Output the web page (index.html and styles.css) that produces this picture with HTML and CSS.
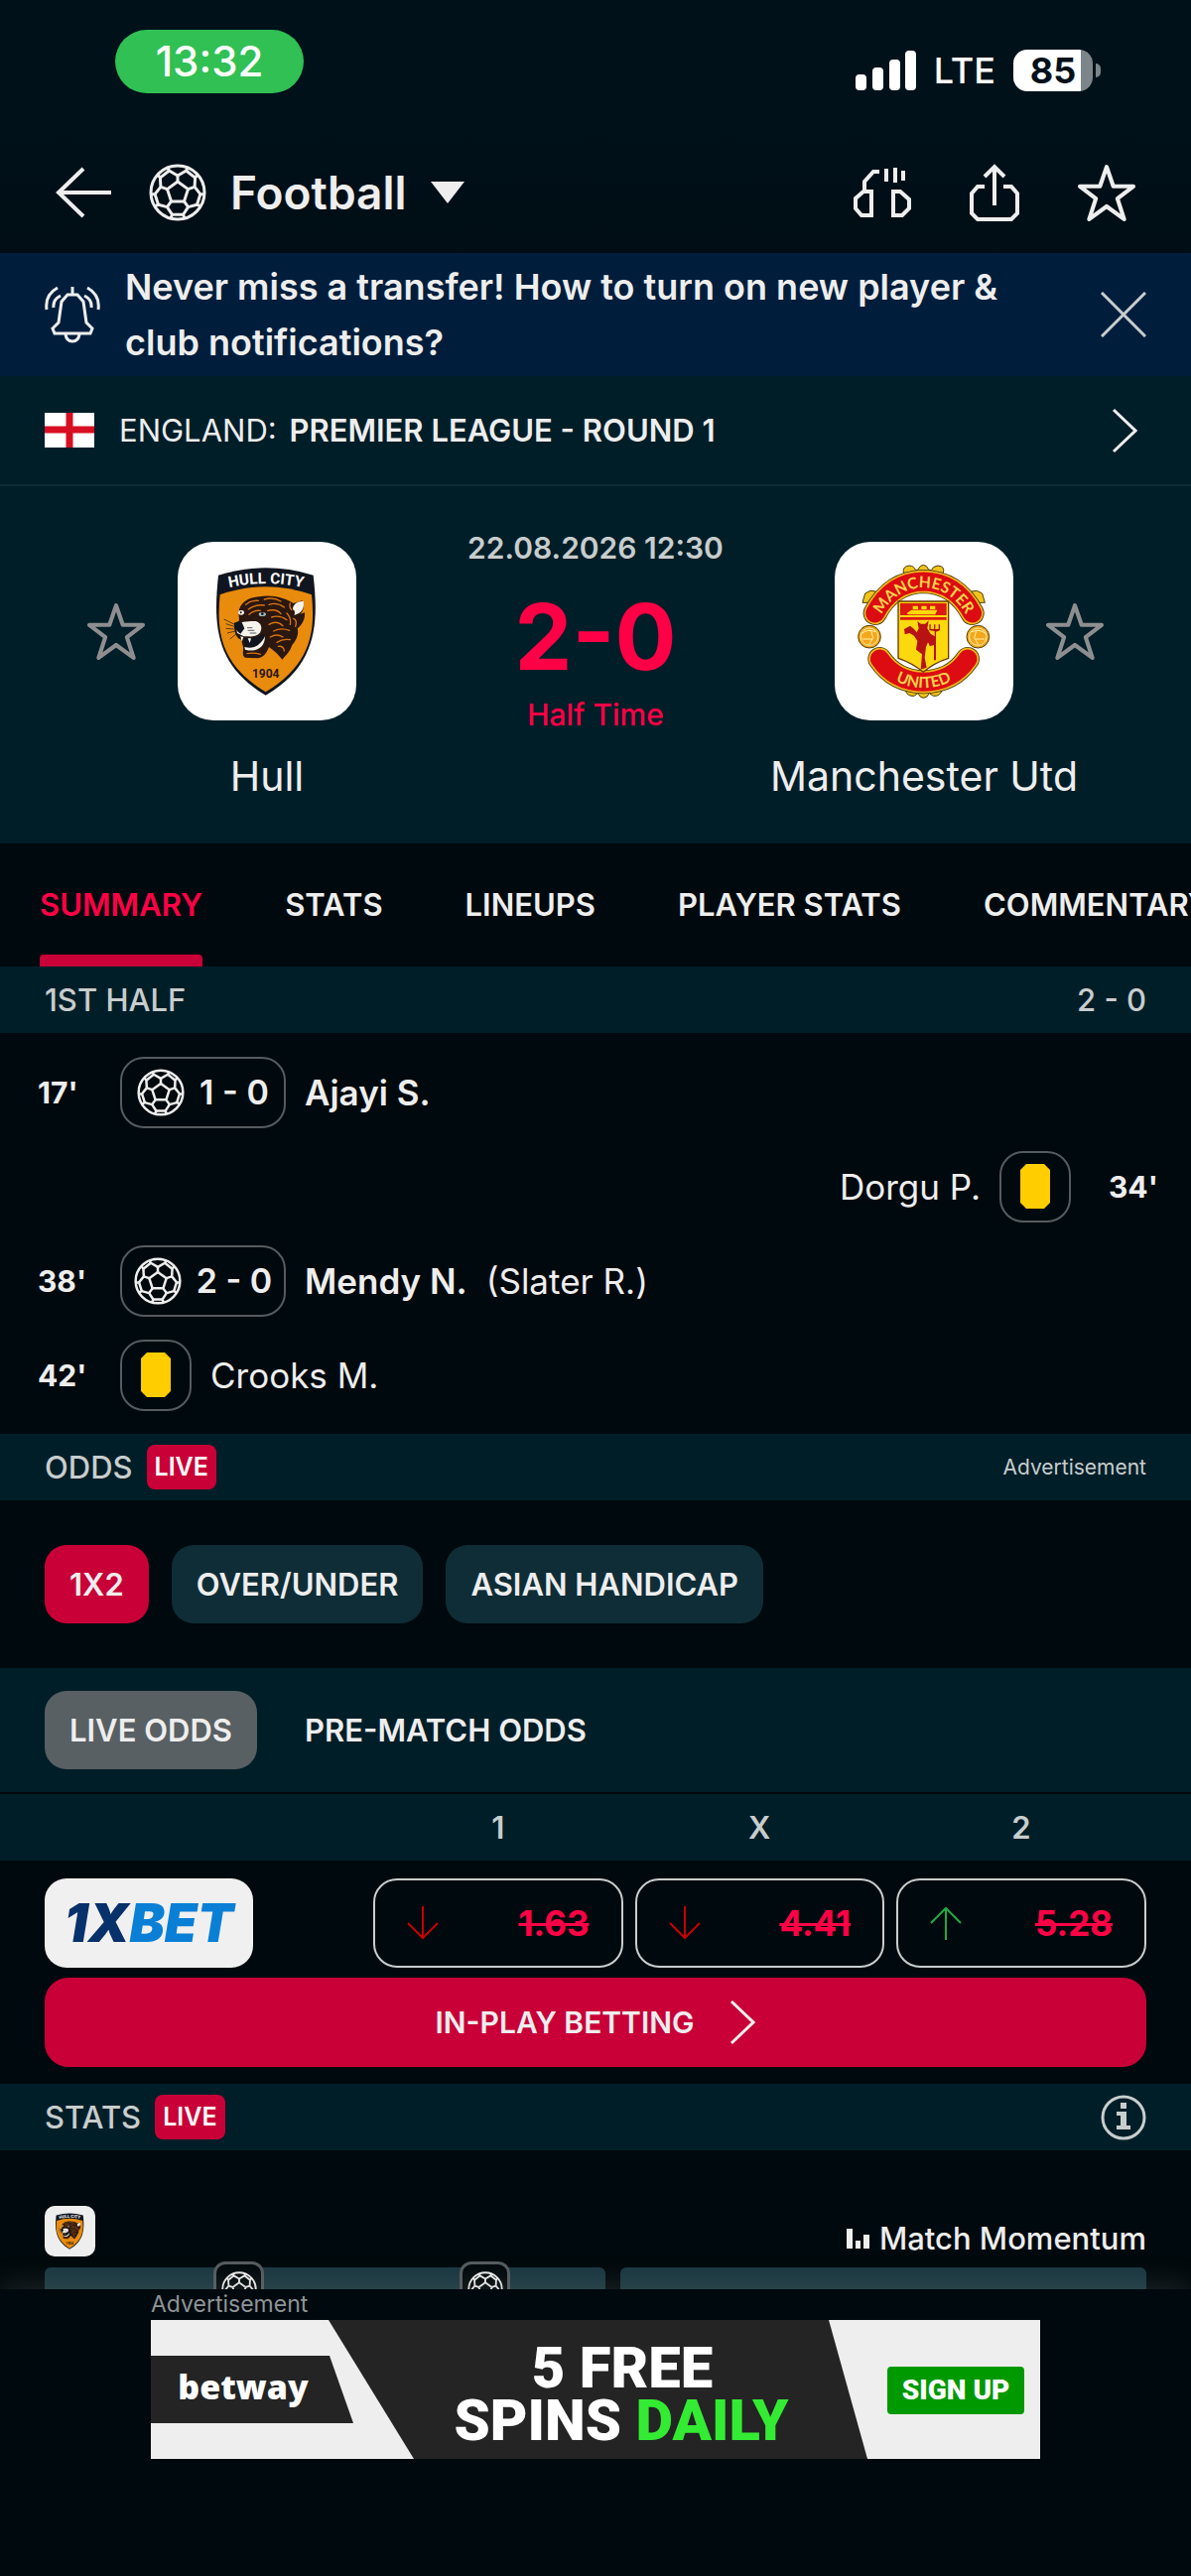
FILE: index.html
```html
<!DOCTYPE html>
<html lang="en">
<head>
    <meta charset="UTF-8">
    <meta name="viewport" content="width=device-width, initial-scale=1.0">
    <title>Hull - Manchester Utd</title>
    <link rel="stylesheet" href="styles.css">
</head>
<body>
    <!-- Shared icons -->
    <svg class="sprite" aria-hidden="true">
        <symbol id="ball" viewBox="-29 -29 58 58">
            <g fill="none" stroke="currentColor" stroke-width="3" stroke-linejoin="round">
                <circle r="27"/>
                <path d="M0-11 10.5-3.4 6.5 8.9H-6.5L-10.5-3.4Z"/>
                <path d="M0-11V-17M10.5-3.4 17.1-5.6M6.5 8.9 10.6 14.6M-6.5 8.9-10.6 14.6M-10.5-3.4-17.1-5.6"/>
                <path d="M-10-25-8.6-22 0-17 8.6-22 10-25M20-18 17.6-14.8 17.1-5.6 22.9 1.6 27 2M23 14 19.5 12.2 10.6 14.6 5.6 22.3 7 26M-23 14-19.5 12.2-10.6 14.6-5.6 22.3-7 26M-20-18-17.6-14.8-17.1-5.6-22.9 1.6-27 2"/>
                <path d="M8.6-22 17.6-14.8M22.9 1.6 19.5 12.2M5.6 22.3H-5.6M-22.9 1.6-19.5 12.2M-8.6-22-17.6-14.8"/>
            </g>
        </symbol>
        <symbol id="star" viewBox="0 0 56 56">
            <path d="M28 3 34.5 22H54L38.5 34 45 54 28 41.5 11 54 17.5 34 2 22H21.5Z" fill="none" stroke="currentColor" stroke-width="4" stroke-linejoin="round"/>
        </symbol>
    </svg>

    <main class="screen">
        <!-- Phone status bar -->
        <div class="status-bar">
            <span class="clock">13:32</span>
            <div class="status-icons">
                <svg width="61" height="40" viewBox="0 0 61 40" fill="#fff">
                    <rect x="0" y="24" width="11" height="16" rx="4"/>
                    <rect x="17" y="17" width="11" height="23" rx="4"/>
                    <rect x="34" y="9" width="11" height="31" rx="4"/>
                    <rect x="50" y="0" width="11" height="40" rx="4"/>
                </svg>
                <span class="network">LTE</span>
                <span class="battery">85</span>
            </div>
        </div>

        <header class="top-bar">
            <button class="icon-btn" aria-label="Back">
                <svg width="56" height="56" viewBox="0 0 56 56"><path d="M28 4 3 28 28 52M3 28H56" fill="none" stroke="currentColor" stroke-width="4"/></svg>
            </button>
            <button class="sport-btn">
                <svg width="58" height="58"><use href="#ball"/></svg>
                Football
                <svg width="34" height="22" viewBox="0 0 34 22"><path d="M0 0H34L17 22Z" fill="currentColor"/></svg>
            </button>
            <div class="top-actions">
                <button class="icon-btn" aria-label="Listen">
                    <svg width="58" height="56" viewBox="0 0 58 56" fill="none" stroke="currentColor" stroke-width="4">
                        <path d="M11 27V17L20 7H26M33 4V17M42 3V18M50 6V16"/>
                        <path d="M18 27H10L2 34V44L8 51H18ZM40 27H47L56 35V44L49 51H40Z"/>
                    </svg>
                </button>
                <button class="icon-btn" aria-label="Share">
                    <svg width="56" height="58" viewBox="0 0 56 58" fill="none" stroke="currentColor" stroke-width="4">
                        <path d="M28 42V3M18 13 28 3 38 13M18 23H11L5 30V50L11 56H45L51 50V30L45 23H37"/>
                    </svg>
                </button>
                <button class="icon-btn" aria-label="Add to favourites">
                    <svg width="58" height="58"><use href="#star"/></svg>
                </button>
            </div>
        </header>

        <!-- Notification banner -->
        <div class="notice">
            <svg width="58" height="58" viewBox="0 0 58 58" fill="none" stroke="#eee" stroke-width="3">
                <path d="M29 1V9M24 9H34L40 16L43 37L49 43L47 48H11L9 43L15 37L18 16ZM22 49Q23 56 29 56Q35 56 36 49"/>
                <path d="M14 2Q1 9 3 24M17 10Q9 14 10 22M44 2Q57 9 55 24M41 10Q49 14 48 22"/>
            </svg>
            <p>Never miss a transfer! How to turn on new player &amp; club notifications?</p>
            <button class="icon-btn" aria-label="Close">
                <svg width="46" height="46" viewBox="0 0 46 46"><path d="M1 1 45 45M45 1 1 45" stroke="#c8cdcd" stroke-width="3"/></svg>
            </button>
        </div>

        <a class="league" href="#">
            <svg width="50" height="35" viewBox="0 0 50 35"><path d="M0 0H50V35H0Z" fill="#fff"/><path d="M25 0V35M0 17H50" stroke="#d80f22" stroke-width="7"/></svg>
            <span>ENGLAND: <strong>PREMIER LEAGUE - ROUND 1</strong></span>
            <svg class="push" width="26" height="46" viewBox="0 0 26 46"><path d="M2 2 24 23 2 44" fill="none" stroke="currentColor" stroke-width="3"/></svg>
        </a>

        <!-- Score -->
        <section class="match">
            <div class="team">
                <button class="icon-btn fav fav-left" aria-label="Follow Hull"><svg width="58" height="58"><use href="#star"/></svg></button>
                <span class="crest">
                    <svg width="180" height="180" viewBox="0 0 540 540">
                        <g id="hull">
                            <path d="M123 101Q266 57 410 101C426 245 423 372 266 464C110 372 108 245 123 101Z" fill="#10151f"/>
                            <path d="M128 160Q266 112 405 160C416 270 405 370 266 454C128 370 117 270 128 160Z" fill="#e98b0c"/>
                            <path id="hull-arc" d="M140 142Q266 110 394 142" fill="none"/>
                            <text class="crest-hull"><textPath href="#hull-arc" startOffset="50%" text-anchor="middle">HULL CITY</textPath></text>
                            <path d="M184 212C190 182 214 168 246 166C284 158 326 170 350 186L376 178C386 196 378 212 370 218L384 214C386 236 374 252 362 262C368 284 354 302 346 312C340 332 328 342 316 356C306 342 290 328 276 318C268 340 256 350 242 352L204 350C192 344 200 328 198 318L192 296C180 292 178 284 174 276L170 254L186 238Z" fill="#2a1710"/>
                            <g fill="none" stroke="#d9730f" stroke-width="4" stroke-linecap="round">
                                <path d="M206 190Q222 176 244 178M214 204Q236 188 262 192M216 220Q230 206 250 208M262 174Q290 166 312 180M276 190Q300 182 322 198M272 208Q300 202 312 218M284 228Q308 220 330 236M276 250Q300 236 318 254M290 270Q312 258 338 268M280 288Q300 276 318 288M300 304Q318 292 340 296M330 216Q344 230 340 250M350 232Q362 236 356 256M322 330Q320 314 304 316M210 338Q228 334 250 340M340 186Q336 196 344 206"/>
                            </g>
                            <path d="M348 204C348 188 364 178 380 180C384 200 376 216 352 222Q358 210 348 204Z" fill="#f7f4ee"/>
                            <path d="M176 256C186 240 212 240 236 240C256 246 256 264 248 276C232 292 212 284 200 286L180 276Z" fill="#f7f4ee"/>
                            <path d="M170 246Q180 238 194 244L202 262L190 278Q174 270 170 246Z" fill="#10151f"/>
                            <path d="M200 290Q232 296 262 278C260 310 246 324 228 328L204 318Z" fill="#10151f"/>
                            <path d="M264 286C264 318 240 336 204 326L202 318C232 326 250 312 264 286ZM212 292 218 306 222 292ZM190 286 194 302 199 288Z" fill="#f7f4ee"/>
                            <ellipse cx="192" cy="214" rx="9" ry="7" fill="#f7f4ee"/>
                            <circle cx="191" cy="214" r="3" fill="#10151f"/>
                            <ellipse cx="256" cy="219" rx="11" ry="6" fill="#a9bdc4"/>
                            <circle cx="256" cy="218" r="4" fill="#10151f"/>
                            <path d="M172 250 140 234M170 256 146 248M172 264 146 262M174 270 150 276M178 278 158 294M210 260H226M212 268H232M218 276H238" stroke="#10151f" stroke-width="2"/>
                            <text class="crest-year" x="266" y="410" text-anchor="middle">1904</text>
                        </g>
                    </svg>
                </span>
                <h2>Hull</h2>
            </div>
            <div class="result">
                <time>22.08.2026 12:30</time>
                <strong class="score">2-0</strong>
                <span class="phase">Half Time</span>
            </div>
            <div class="team">
                <span class="crest">
                    <svg width="180" height="180" viewBox="0 0 540 540">
                        <g stroke="#4c3d09" stroke-width="3" fill="#f0c419">
                            <path d="M208 94Q204 74 226 72Q242 74 244 86L252 84Q258 70 268 70Q278 70 284 84L292 86Q296 74 312 72Q334 74 328 94Z"/>
                            <path d="M84 184 92 156 108 148 124 150 116 184ZM454 184 446 156 430 148 414 150 422 184Z"/>
                            <path d="M214 450Q220 468 240 466L252 458Q258 472 268 472Q280 472 286 458L298 466Q318 468 324 450Z"/>
                        </g>
                        <g fill="none" stroke-linecap="round">
                            <path d="M122 216Q172 122 268 120Q366 122 416 216" stroke="#4c3d09" stroke-width="72"/>
                            <path d="M122 216Q172 122 268 120Q366 122 416 216" stroke="#f0b81c" stroke-width="67"/>
                            <path d="M122 216Q172 122 268 120Q366 122 416 216" stroke="#dc0c12" stroke-width="57"/>
                            <path d="M136 354Q182 422 268 424Q356 422 402 354" stroke="#4c3d09" stroke-width="72"/>
                            <path d="M136 354Q182 422 268 424Q356 422 402 354" stroke="#f0b81c" stroke-width="67"/>
                            <path d="M136 354Q182 422 268 424Q356 422 402 354" stroke="#dc0c12" stroke-width="57"/>
                            <path id="mu-top" d="M132 238Q178 142 268 138Q360 142 406 238"/>
                            <path id="mu-bottom" d="M130 376Q184 440 268 442Q354 440 408 376"/>
                        </g>
                        <text class="crest-mu"><textPath href="#mu-top" startOffset="50%" text-anchor="middle">MANCHESTER</textPath></text>
                        <text class="crest-mu"><textPath href="#mu-bottom" startOffset="50%" text-anchor="middle">UNITED</textPath></text>
                        <path d="M192 180H344V352Q300 366 268 394Q234 366 192 352Z" fill="#fbd90d" stroke="#6b3a08" stroke-width="4"/>
                        <path d="M198 186H338V222H198ZM198 228H338V236H198Z" fill="#dc1a12"/>
                        <path d="M218 216 232 206H310L304 220H222ZM236 194H252V204H236ZM262 194H278V204H262ZM288 194H304V204H288Z" fill="#fbd90d"/>
                        <path d="M254 262 250 240 260 248H274L284 238 280 262 290 278 302 286 302 270 286 268V250H290V264H300V250H304V264H314V250H318V268L306 272V358H300V312L288 316 282 304 276 318 272 350 278 380 260 386 264 340 246 326 250 300 240 284 226 276 212 280 210 264 228 254 240 264 248 274Z" fill="#b81212"/>
                        <g fill="#f4a71c" stroke="#4c3d09" stroke-width="3">
                            <circle cx="105" cy="287" r="34"/>
                            <circle cx="433" cy="287" r="34"/>
                        </g>
                        <g fill="#f4a71c" stroke="#fff1a8" stroke-width="3">
                            <circle cx="105" cy="287" r="26"/>
                            <circle cx="433" cy="287" r="26"/>
                            <path d="M82 278Q98 262 124 272M110 270 116 290 104 310M84 294H114M456 278Q440 262 414 272M428 270 422 290 434 310M454 294H424" fill="none"/>
                        </g>
                    </svg>
                </span>
                <button class="icon-btn fav fav-right" aria-label="Follow Manchester Utd"><svg width="58" height="58"><use href="#star"/></svg></button>
                <h2>Manchester Utd</h2>
            </div>
        </section>

        <nav class="tabs">
            <a class="active" href="#">SUMMARY</a>
            <a href="#">STATS</a>
            <a href="#">LINEUPS</a>
            <a href="#">PLAYER STATS</a>
            <a href="#">COMMENTARY</a>
        </nav>

        <!-- Match events -->
        <div class="bar"><h3>1ST HALF</h3><span class="push">2 - 0</span></div>
        <ul class="events">
            <li>
                <span class="minute">17'</span>
                <span class="badge badge-goal"><svg width="48" height="48"><use href="#ball"/></svg>1 - 0</span>
                <strong>Ajayi S.</strong>
            </li>
            <li class="away">
                <span class="minute">34'</span>
                <span class="badge"><i class="card"></i></span>
                <span>Dorgu P.</span>
            </li>
            <li>
                <span class="minute">38'</span>
                <span class="badge badge-goal"><svg width="48" height="48"><use href="#ball"/></svg>2 - 0</span>
                <strong>Mendy N.</strong>
                <span>(Slater R.)</span>
            </li>
            <li>
                <span class="minute">42'</span>
                <span class="badge"><i class="card"></i></span>
                <span>Crooks M.</span>
            </li>
        </ul>

        <!-- Odds -->
        <div class="bar"><h3>ODDS</h3><span class="live">LIVE</span><small class="push">Advertisement</small></div>
        <div class="chips">
            <button class="chip chip-active">1X2</button>
            <button class="chip">OVER/UNDER</button>
            <button class="chip">ASIAN HANDICAP</button>
        </div>
        <div class="odds-switch">
            <button class="chip chip-grey">LIVE ODDS</button>
            <button class="chip chip-plain">PRE-MATCH ODDS</button>
        </div>
        <table class="odds">
            <thead>
                <tr><th></th><th>1</th><th>X</th><th>2</th></tr>
            </thead>
            <tbody>
                <tr>
                    <td><a class="bookmaker" href="#"><b>1X</b>BET</a></td>
                    <td><button class="odd"><svg class="down" width="32" height="34" viewBox="0 0 32 34"><path d="M16 0V32M1 17 16 32 31 17"/></svg><s>1.63</s></button></td>
                    <td><button class="odd"><svg class="down" width="32" height="34" viewBox="0 0 32 34"><path d="M16 0V32M1 17 16 32 31 17"/></svg><s>4.41</s></button></td>
                    <td><button class="odd"><svg class="up" width="32" height="34" viewBox="0 0 32 34"><path d="M16 34V2M1 17 16 2 31 17"/></svg><s>5.28</s></button></td>
                </tr>
            </tbody>
        </table>
        <div class="bet-row">
            <button class="bet-btn">IN-PLAY BETTING
                <svg width="26" height="46" viewBox="0 0 26 46"><path d="M2 2 24 23 2 44" fill="none" stroke="currentColor" stroke-width="3"/></svg>
            </button>
        </div>

        <!-- Stats -->
        <div class="bar">
            <h3>STATS</h3><span class="live">LIVE</span>
            <button class="icon-btn push" aria-label="Info">
                <svg width="46" height="46" viewBox="0 0 46 46"><circle cx="23" cy="23" r="21" fill="none" stroke="#c8cdcd" stroke-width="3"/><path d="M20 8H26V14H20ZM16 17H26V31H30V35H16V31H20V21H16Z" fill="#c8cdcd"/></svg>
            </button>
        </div>
        <section class="momentum">
            <div class="momentum-head">
                <span class="crest crest-small"><svg width="51" height="51" viewBox="0 0 540 540"><use href="#hull"/></svg></span>
                <h3 class="push"><svg width="23" height="20" viewBox="0 0 23 20" fill="currentColor"><path d="M0 0H6V20H0ZM9 12H14V20H9ZM17 6H23V20H17Z"/></svg>Match Momentum</h3>
            </div>
            <div class="chart">
                <div class="half first-half">
                    <span class="goal goal-17"><svg width="36" height="36"><use href="#ball"/></svg></span>
                    <span class="goal goal-38"><svg width="36" height="36"><use href="#ball"/></svg></span>
                </div>
                <div class="half second-half"></div>
            </div>
        </section>
    </main>

    <!-- Sticky advert -->
    <footer class="advert">
        <small>Advertisement</small>
        <a href="#" aria-label="betway">
            <svg viewBox="0 0 896 140">
                <path d="M0 0H896V140H0Z" fill="#eee"/>
                <path d="M179 0H683L722 140H265Z" fill="#242424"/>
                <path d="M0 36H180L204 104H0Z" fill="#242424"/>
                <text class="ad-brand" x="93" y="80" text-anchor="middle">betway</text>
                <text class="ad-line" x="475" y="68" text-anchor="middle">5 FREE</text>
                <text class="ad-line" x="474" y="121" text-anchor="middle">SPINS <tspan fill="#33eb33">DAILY</tspan></text>
                <rect x="742" y="47" width="138" height="48" rx="4" fill="#090"/>
                <text class="ad-sign" x="811" y="80" text-anchor="middle">SIGN UP</text>
            </svg>
        </a>
    </footer>
</body>
</html>
```

FILE: styles.css
```css
/* Global styles */
* {
    box-sizing: border-box;
}

body {
    margin: 0;
    height: 100vh;
    display: flex;
    flex-direction: column;
    background-color: #00090d;
    color: #eee;
    font-family: 'Inter', 'Liberation Sans', sans-serif;
    font-size: 31px;
    line-height: 36px;
}

h2, h3, p, ul {
    margin: 0;
    padding: 0;
    font-size: inherit;
}

a {
    color: inherit;
    text-decoration: none;
}

button {
    padding: 0;
    border: none;
    background: none;
    color: inherit;
    font: inherit;
    cursor: pointer;
}

svg {
    display: block;
    flex: none;
}

.sprite {
    position: absolute;
    width: 0;
    height: 0;
}

.push {
    margin-left: auto;
}

.screen {
    flex: 1;
    min-height: 0;
    overflow: hidden;
}

/* Status bar */
.status-bar {
    display: flex;
    align-items: flex-end;
    justify-content: space-between;
    height: 132px;
    padding: 0 91px 38px 116px;
    background-color: #00111a;
}

.clock {
    width: 190px;
    border-radius: 32px;
    background-color: #30c053;
    color: #fff;
    font-size: 42px;
    font-weight: 500;
    line-height: 64px;
    text-align: center;
}

.status-icons {
    display: flex;
    align-items: center;
    gap: 18px;
    color: #fff;
    font-size: 36px;
    font-weight: 500;
    line-height: 46px;
}

.battery {
    position: relative;
    width: 80px;
    height: 42px;
    margin-right: 8px;
    border-radius: 14px;
    background: linear-gradient(to right, #fff 68px, #7c868a 68px);
    color: #00111a;
    font-weight: 700;
    line-height: 42px;
    text-align: center;
}

.battery::after {
    content: "";
    position: absolute;
    top: 14px;
    left: 83px;
    width: 5px;
    height: 14px;
    border-radius: 0 5px 5px 0;
    background-color: #7c868a;
}

/* Top bar */
.top-bar {
    display: flex;
    align-items: center;
    gap: 38px;
    height: 123px;
    padding: 0 56px;
    background: linear-gradient(#00111a, #000d14);
}

.sport-btn {
    display: flex;
    align-items: center;
    gap: 24px;
    font-size: 46px;
    font-weight: 600;
}

.top-actions {
    display: flex;
    gap: 56px;
    margin-left: auto;
}

/* Notification banner */
.notice {
    display: flex;
    align-items: center;
    gap: 24px;
    padding: 6px 45px 6px 44px;
    background-color: #001e3c;
    font-size: 36px;
    font-weight: 600;
    line-height: 56px;
}

.notice p {
    flex: 1;
    padding-right: 60px;
}

/* League */
.league {
    display: flex;
    align-items: center;
    gap: 25px;
    height: 111px;
    padding: 0 54px 0 45px;
    border-bottom: 2px solid #0f2d37;
    background-color: #001e28;
}

.league strong {
    margin-left: 4px;
    font-weight: 600;
}

/* Score */
.match {
    display: grid;
    grid-template-columns: 1fr 260px 1fr;
    padding: 44px 68px;
    background-color: #001e28;
}

.team {
    display: grid;
    grid-template-columns: 1fr 180px 1fr;
    align-items: center;
    row-gap: 32px;
    padding-top: 12px;
}

.team h2 {
    grid-column: 1 / -1;
    font-size: 41px;
    font-weight: 400;
    line-height: 48px;
    text-align: center;
}

.crest {
    grid-column: 2;
    overflow: hidden;
    border-radius: 36px;
    background-color: #fff;
}

.crest-hull {
    fill: #fff;
    font: 700 46px 'Roboto', sans-serif;
}

.crest-year {
    fill: #2a1710;
    font: 700 36px 'Roboto', sans-serif;
}

.crest-mu {
    fill: #fbd44a;
    font: 700 47px 'Lato', sans-serif;
}

.fav {
    color: #8e8e90;
}

.fav-left {
    justify-self: end;
    margin-right: 33px;
}

.fav-right {
    justify-self: start;
    margin-left: 33px;
}

.result {
    display: flex;
    flex-direction: column;
    align-items: center;
    color: #ff0046;
    font-size: 30px;
    font-weight: 500;
}

.result time {
    color: #c8cdcd;
    font-weight: 600;
}

.score {
    margin: 24px 0 12px;
    font-size: 92px;
    font-weight: 700;
    line-height: 96px;
}

/* Tabs */
.tabs {
    display: flex;
    gap: 83px;
    overflow: hidden;
    padding-left: 40px;
    font-weight: 600;
    white-space: nowrap;
}

.tabs a {
    padding-top: 44px;
}

.tabs a::after {
    content: "";
    display: block;
    height: 12px;
    margin-top: 32px;
    border-radius: 4px 4px 0 0;
}

.tabs .active {
    color: #ff0046;
}

.tabs .active::after {
    background-color: #c80037;
}

/* Section bars */
.bar {
    display: flex;
    align-items: center;
    gap: 14px;
    height: 67px;
    padding: 0 45px;
    background-color: #001e28;
    color: #c8cdcd;
    font-weight: 500;
}

.bar h3 {
    font-weight: 500;
}

.live {
    padding: 0 8px;
    border-radius: 8px;
    background-color: #c80037;
    color: #fff;
    font-size: 25px;
    font-weight: 600;
    line-height: 45px;
}

small {
    font-size: 21px;
    font-weight: 400;
}

/* Match events */
.events {
    padding: 12px 38px;
    list-style: none;
    font-size: 35px;
}

.events li {
    display: flex;
    align-items: center;
    height: 95px;
    gap: 19px;
}

.events .away {
    flex-direction: row-reverse;
}

.events strong {
    font-weight: 600;
}

.minute {
    width: 64px;
    font-size: 30px;
    font-weight: 700;
}

.away .minute {
    width: 45px;
    margin-left: 19px;
}

.badge {
    display: flex;
    align-items: center;
    justify-content: center;
    gap: 15px;
    width: 72px;
    height: 72px;
    border: 2px solid #555c60;
    border-radius: 24px;
    font-size: 34px;
    font-weight: 600;
}

.badge-goal {
    width: 167px;
}

.card {
    width: 30px;
    height: 45px;
    background-color: #ffcd00;
    clip-path: polygon(6px 0, 24px 0, 30px 6px, 30px 39px, 24px 45px, 6px 45px, 0 39px, 0 6px);
}

/* Odds */
.chips {
    display: flex;
    gap: 23px;
    padding: 45px;
}

.chip {
    height: 79px;
    padding: 0 25px;
    border-radius: 22px;
    background-color: #0f2d37;
    font-weight: 600;
}

.chip-active {
    background-color: #c80037;
}

.chip-grey {
    background-color: #586063;
}

.chip-plain {
    background: none;
}

.odds-switch {
    display: flex;
    gap: 23px;
    padding: 23px 45px;
    border-bottom: 2px solid #00090d;
    background-color: #001e28;
}

.odds {
    width: 100%;
    table-layout: fixed;
    border-collapse: collapse;
}

.odds th {
    height: 67px;
    padding: 0;
    background-color: #001e28;
    color: #c8cdcd;
    font-weight: 600;
}

.odds th:first-child {
    width: 370px;
}

.odds th:last-child {
    width: 303px;
    padding-right: 39px;
}

.odds td {
    padding: 18px 6px 10px;
}

.odds td:first-child {
    padding-left: 45px;
}

.odds td:last-child {
    padding-right: 45px;
}

.bookmaker {
    display: block;
    width: 210px;
    border-radius: 22px;
    background-color: #f0f0f0;
    color: #0a7fd6;
    font-size: 53px;
    font-style: italic;
    font-weight: 900;
    line-height: 90px;
    text-align: center;
}

.bookmaker b {
    color: #06316b;
    font-weight: 900;
}

.odd {
    display: flex;
    align-items: center;
    justify-content: space-between;
    width: 100%;
    height: 90px;
    padding: 0 32px;
    border: 2px solid #c8cdcd;
    border-radius: 24px;
    color: #ff0046;
    font-size: 35px;
    font-weight: 700;
}

.down, .up {
    fill: none;
    stroke: #c80000;
    stroke-width: 2;
}

.up {
    stroke: #1eaa46;
}

.bet-row {
    padding: 0 45px 17px;
}

.bet-btn {
    display: flex;
    align-items: center;
    justify-content: center;
    gap: 36px;
    width: 100%;
    height: 90px;
    border-radius: 24px;
    background-color: #c80037;
    font-size: 30px;
    font-weight: 600;
}

/* Match momentum */
.momentum {
    padding: 56px 45px 0;
}

.momentum-head {
    display: flex;
    align-items: flex-end;
}

.momentum-head h3 {
    display: flex;
    align-items: center;
    gap: 10px;
    font-weight: 500;
}

.crest-small {
    border-radius: 10px;
    background-color: #eee;
}

.chart {
    display: flex;
    gap: 15px;
    margin-top: 11px;
}

.half {
    position: relative;
    height: 240px;
    border-radius: 6px;
    background-color: #1a3842;
}

.first-half {
    flex: 565;
}

.second-half {
    flex: 530;
}

.goal {
    position: absolute;
    top: -6px;
    width: 51px;
    height: 51px;
    padding: 7px 5px;
    border: 3px solid #555c60;
    border-radius: 12px;
    background-color: #00090d;
}

.goal-17 {
    left: 30%;
}

.goal-38 {
    left: 74%;
}

/* Sticky advert */
.advert {
    position: relative;
    height: 289px;
    padding: 0 152px;
    background-color: #00090d;
    box-shadow: 0 0 30px rgba(130, 130, 120, 0.3);
}

.advert small {
    display: block;
    color: #8e9496;
    font-size: 23px;
    line-height: 31px;
}

.ad-brand {
    fill: #fff;
    font: 800 34px 'Open Sans', sans-serif;
}

.ad-line {
    fill: #fff;
    font: 900 58px 'Roboto', sans-serif;
}

.ad-sign {
    fill: #fff;
    font: 900 28px 'Roboto', sans-serif;
}
```
